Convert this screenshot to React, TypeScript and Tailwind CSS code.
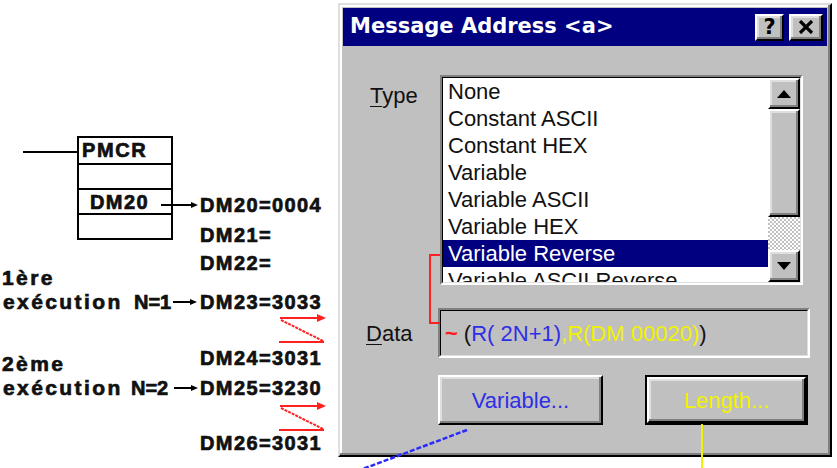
import React from "react";

const items = [
  "None",
  "Constant ASCII",
  "Constant HEX",
  "Variable",
  "Variable ASCII",
  "Variable HEX",
  "Variable Reverse",
  "Variable ASCII Reverse",
];

const raised =
  "border-2 border-t-white border-l-white border-r-black border-b-black bg-[#c0c0c0] shadow-[inset_-2px_-2px_#808080,inset_2px_2px_#dfdfdf]";

const dm = "absolute left-[200px] text-[20px] leading-[20px] tracking-[1.4px]";
const word = "absolute text-[21px] leading-[20px] tracking-[2.4px]";

function Diagram() {
  return (
    <div className="relative h-full w-[338px] shrink-0 font-bold text-[#111] [-webkit-text-stroke:0.7px_#111]">
      {/* PMCR instruction block */}
      <div className="absolute left-[77px] top-[136px] flex w-[96px] flex-col border-2 border-black">
        <div className="h-[25px] pl-[3px] text-[20px] leading-[25px] tracking-[1.6px]">PMCR</div>
        <div className="h-[25px] border-t-2 border-black" />
        <div className="h-[25px] border-t-2 border-black pl-[11px] text-[20px] leading-[25px] tracking-[1.4px]">DM20</div>
        <div className="h-[25px] border-t-2 border-black" />
      </div>

      <div className={`${dm} top-[195px]`}>DM20=0004</div>
      <div className={`${dm} top-[225px]`}>DM21=</div>
      <div className={`${dm} top-[253px]`}>DM22=</div>
      <div className={`${dm} top-[292px]`}>DM23=3033</div>
      <div className={`${dm} top-[348px]`}>DM24=3031</div>
      <div className={`${dm} top-[378px]`}>DM25=3230</div>
      <div className={`${dm} top-[433px]`}>DM26=3031</div>

      <div className={`${word} left-[2px] top-[268px]`}>1ère</div>
      <div className={`${word} left-[3px] top-[292px]`}>exécution</div>
      <div className="absolute left-[134px] top-[292px] text-[20px] leading-[20px]">N=1</div>

      <div className={`${word} left-[2px] top-[354px]`}>2ème</div>
      <div className={`${word} left-[3px] top-[378px]`}>exécution</div>
      <div className="absolute left-[131px] top-[378px] text-[20px] leading-[20px]">N=2</div>
    </div>
  );
}

function Arrow({ up }: { up?: boolean }) {
  return (
    <svg width="14" height="8" viewBox="0 0 14 8">
      {up ? <polygon points="7,0 14,8 0,8" fill="#000" /> : <polygon points="0,0 14,0 7,8" fill="#000" />}
    </svg>
  );
}

function Dialog() {
  return (
    <div className="mt-[3px] flex h-[454px] w-[494px] shrink-0 flex-col border-2 border-t-[#dfdfdf] border-l-[#dfdfdf] border-r-black border-b-black bg-[#c0c0c0] p-[3px] shadow-[inset_-2px_-2px_#808080,inset_2px_2px_#fff]">
      {/* title bar */}
      <div className="flex h-[38px] items-center bg-[#000080] pl-[7px] pr-[4px]">
        <span className="font-['DejaVu_Sans',sans-serif] text-[21px] font-bold text-white">Message Address &lt;a&gt;</span>
        <div className="ml-auto flex gap-[5px]">
          <div className={`${raised} flex h-[27px] w-[29px] items-center justify-center font-['DejaVu_Sans',sans-serif] text-[21px] font-bold leading-none text-black`}>
            ?
          </div>
          <div className={`${raised} flex h-[27px] w-[34px] items-center justify-center`}>
            <svg width="16" height="14" viewBox="0 0 16 14">
              <path d="M2 1 L14 13 M14 1 L2 13" stroke="#000" strokeWidth="3.2" />
            </svg>
          </div>
        </div>
      </div>

      <div className="flex flex-col text-[22px] text-[#111]">
        {/* Type row */}
        <div className="mt-[29px] flex items-start">
          <div className="mt-[7px] w-[95px] pl-[27px] leading-[27px]">
            <span className="underline decoration-1 underline-offset-[3px]">T</span>ype
          </div>
          <div className="ml-[2px] h-[210px] w-[363px] border-2 border-t-[#808080] border-l-[#808080] border-r-white border-b-white">
            <div className="flex h-full border border-t-black border-l-black border-r-[#dfdfdf] border-b-[#dfdfdf]">
              <div className="flex-1 overflow-hidden bg-white">
                {items.map((t) => (
                  <div
                    key={t}
                    className={
                      t === "Variable Reverse"
                        ? "h-[27px] whitespace-nowrap bg-[#000080] pl-[5px] leading-[27px] text-white"
                        : "h-[27px] whitespace-nowrap pl-[5px] leading-[27px]"
                    }
                  >
                    {t}
                  </div>
                ))}
              </div>
              <div className="flex w-[32px] flex-col">
                <div className={`${raised} flex h-[31px] items-center justify-center`}>
                  <Arrow up />
                </div>
                <div className={`${raised} h-[108px]`} />
                <div className="h-[33px] bg-[#c0c0c0] bg-[image:repeating-conic-gradient(#c0c0c0_0%_25%,#ffffff_0%_50%)] bg-[length:4px_4px]" />
                <div className={`${raised} flex h-[32px] items-center justify-center`}>
                  <Arrow />
                </div>
              </div>
            </div>
          </div>
        </div>

        {/* Data row */}
        <div className="mt-[23px] flex items-center">
          <div className="w-[95px] pl-[23px]">
            <span className="underline decoration-1 underline-offset-[3px]">D</span>ata
          </div>
          <div className="h-[50px] w-[372px] border-2 border-t-[#808080] border-l-[#808080] border-r-white border-b-white">
            <div className="flex h-full items-center whitespace-nowrap border border-t-black border-l-black border-r-[#dfdfdf] border-b-[#dfdfdf] pl-[4px]">
              <span className="mr-[6px] font-bold text-[#ff1a1a]">~</span>
              <span>(</span>
              <span className="text-[#2e2ee6]">R( 2N+1)</span>
              <span className="text-[#f2f200]">,R(DM 00020)</span>
              <span>)</span>
            </div>
          </div>
        </div>

        {/* buttons */}
        <div className="mt-[17px] flex">
          <div className={`${raised} ml-[95px] flex h-[50px] w-[165px] items-center justify-center text-[#2e2ee6]`}>
            Variable...
          </div>
          <div className="ml-[42px] h-[50px] w-[163px] border-2 border-black">
            <div className={`${raised} flex h-full items-center justify-center text-[#f2f200]`}>Length...</div>
          </div>
        </div>
      </div>
    </div>
  );
}

function Annotations() {
  return (
    <svg className="pointer-events-none absolute inset-0" width="837" height="468" viewBox="0 0 837 468">
      {/* ladder input line */}
      <line x1="23" y1="152" x2="78" y2="152" stroke="#000" strokeWidth="2" />
      {/* black arrows */}
      <line x1="161" y1="205" x2="193" y2="205" stroke="#000" strokeWidth="2" />
      <polygon points="191,202 198,205 191,208" fill="#000" />
      <line x1="173" y1="302" x2="192" y2="302" stroke="#000" strokeWidth="2" />
      <polygon points="190,299 197,302 190,305" fill="#000" />
      <line x1="174" y1="388" x2="193" y2="388" stroke="#000" strokeWidth="2" />
      <polygon points="191,385 198,388 191,391" fill="#000" />

      {/* red swap marks */}
      <g stroke="#ff2020" strokeWidth="2" fill="none">
        <line x1="280" y1="318" x2="319" y2="318" />
        <line x1="281" y1="320" x2="323" y2="341" strokeDasharray="3 1" />
        <line x1="279" y1="342" x2="324" y2="342" />
        <line x1="280" y1="406" x2="319" y2="406" />
        <line x1="281" y1="408" x2="323" y2="429" strokeDasharray="3 1" />
        <line x1="279" y1="430" x2="324" y2="430" />
        <polyline points="440,255 430,255 430,323 440,323" />
      </g>
      <polygon points="317,314 326,318 317,322" fill="#ff2020" />
      <polygon points="317,402 326,406 317,410" fill="#ff2020" />

      {/* blue and yellow leaders */}
      <line x1="467" y1="430" x2="360" y2="470" stroke="#2a2aff" strokeWidth="2.5" strokeDasharray="5 2" />
      <line x1="702" y1="424" x2="702" y2="468" stroke="#f2f200" strokeWidth="2" />
    </svg>
  );
}

export default function App() {
  return (
    <div className="relative flex h-[468px] w-[837px] overflow-hidden bg-white font-['Liberation_Sans',Arial,sans-serif]">
      <Diagram />
      <Dialog />
      <Annotations />
    </div>
  );
}
